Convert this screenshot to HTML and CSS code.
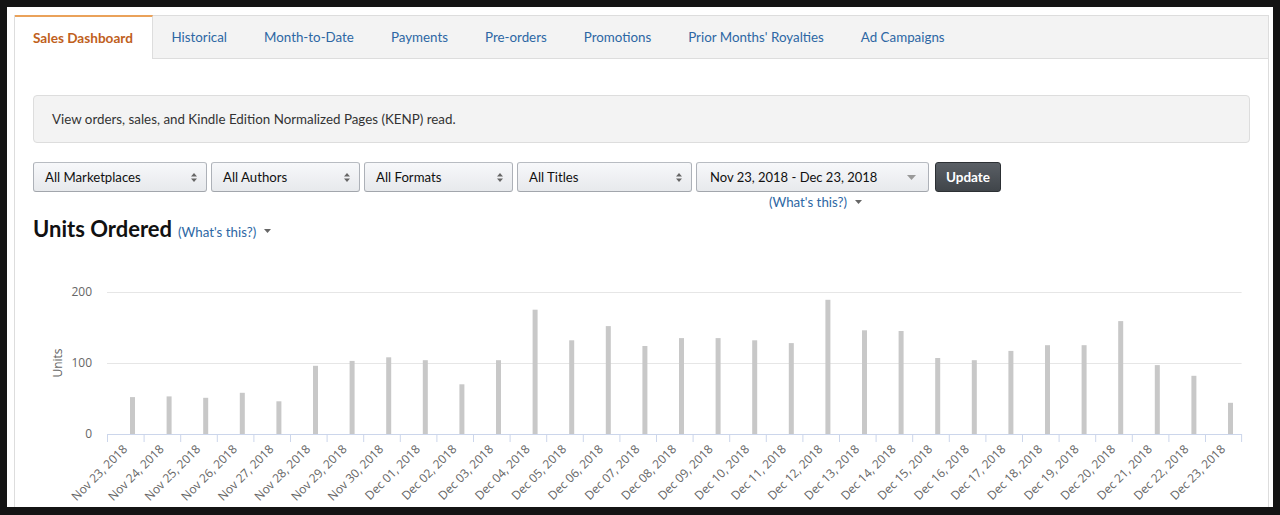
FILE: index.html
```html
<!DOCTYPE html>
<html>
<head>
<meta charset="utf-8">
<link rel="stylesheet" href="styles.css">
</head>
<body>
<div class="frame">
  <div class="panel">
    <nav class="tabs">
      <a class="tab active">Sales Dashboard</a>
      <a class="tab">Historical</a>
      <a class="tab">Month-to-Date</a>
      <a class="tab">Payments</a>
      <a class="tab">Pre-orders</a>
      <a class="tab">Promotions</a>
      <a class="tab">Prior Months' Royalties</a>
      <a class="tab">Ad Campaigns</a>
    </nav>
    <div class="content">
      <div class="info">View orders, sales, and Kindle Edition Normalized Pages (KENP) read.</div>
      <div class="filters">
        <div class="select w-market"><span>All Marketplaces</span><svg class="updown" width="6" height="9" viewBox="0 0 6 9"><path d="M0 3.5 L3 0 L6 3.5 Z M0 5.5 L3 9 L6 5.5 Z" fill="#666"/></svg></div>
        <div class="select w-author"><span>All Authors</span><svg class="updown" width="6" height="9" viewBox="0 0 6 9"><path d="M0 3.5 L3 0 L6 3.5 Z M0 5.5 L3 9 L6 5.5 Z" fill="#666"/></svg></div>
        <div class="select w-format"><span>All Formats</span><svg class="updown" width="6" height="9" viewBox="0 0 6 9"><path d="M0 3.5 L3 0 L6 3.5 Z M0 5.5 L3 9 L6 5.5 Z" fill="#666"/></svg></div>
        <div class="select w-title"><span>All Titles</span><svg class="updown" width="6" height="9" viewBox="0 0 6 9"><path d="M0 3.5 L3 0 L6 3.5 Z M0 5.5 L3 9 L6 5.5 Z" fill="#666"/></svg></div>
        <div class="datecol">
          <div class="select date"><span>Nov 23, 2018 - Dec 23, 2018</span><svg class="down" width="9" height="5" viewBox="0 0 9 5"><path d="M0 0 L9 0 L4.5 5 Z" fill="#999"/></svg></div>
          <div class="help center"><a class="link">(What's this?)</a><svg class="caret" width="7" height="4" viewBox="0 0 7 4"><path d="M0 0 L7 0 L3.5 4 Z" fill="#666"/></svg></div>
        </div>
        <button class="update">Update</button>
      </div>
      <div class="heading-row">
        <h2 class="heading">Units Ordered</h2>
        <a class="link">(What's this?)</a><svg class="caret" width="7" height="4" viewBox="0 0 7 4"><path d="M0 0 L7 0 L3.5 4 Z" fill="#666"/></svg>
      </div>
      <svg class="chart" width="1216" height="260" viewBox="0 0 1216 260">
        <g class="grid">
          <line x1="74" y1="42.5" x2="1208.6" y2="42.5"/>
          <line x1="74" y1="113.5" x2="1208.6" y2="113.5"/>
        </g>
        <g class="ylabels">
          <text x="59" y="46">200</text>
          <text x="59" y="117">100</text>
          <text x="59" y="188">0</text>
        </g>
        <text class="ytitle" transform="translate(29,113) rotate(-90)">Units</text>
        <g class="bars">
          <rect x="97" y="147.1" width="5" height="36.9"/>
          <rect x="133.6" y="146.4" width="5" height="37.6"/>
          <rect x="170.2" y="147.8" width="5" height="36.2"/>
          <rect x="206.8" y="142.8" width="5" height="41.2"/>
          <rect x="243.4" y="151.3" width="5" height="32.7"/>
          <rect x="280" y="115.8" width="5" height="68.2"/>
          <rect x="316.6" y="110.9" width="5" height="73.1"/>
          <rect x="353.2" y="107.3" width="5" height="76.7"/>
          <rect x="389.8" y="110.2" width="5" height="73.8"/>
          <rect x="426.4" y="134.3" width="5" height="49.7"/>
          <rect x="463" y="110.2" width="5" height="73.8"/>
          <rect x="499.6" y="59.7" width="5" height="124.3"/>
          <rect x="536.2" y="90.3" width="5" height="93.7"/>
          <rect x="572.8" y="76.1" width="5" height="107.9"/>
          <rect x="609.4" y="96" width="5" height="88"/>
          <rect x="646" y="88.1" width="5" height="95.9"/>
          <rect x="682.6" y="88.1" width="5" height="95.9"/>
          <rect x="719.2" y="90.3" width="5" height="93.7"/>
          <rect x="755.8" y="93.1" width="5" height="90.9"/>
          <rect x="792.4" y="49.8" width="5" height="134.2"/>
          <rect x="829" y="80.3" width="5" height="103.7"/>
          <rect x="865.6" y="81" width="5" height="103"/>
          <rect x="902.2" y="108" width="5" height="76"/>
          <rect x="938.8" y="110.2" width="5" height="73.8"/>
          <rect x="975.4" y="100.9" width="5" height="83.1"/>
          <rect x="1012" y="95.2" width="5" height="88.8"/>
          <rect x="1048.6" y="95.2" width="5" height="88.8"/>
          <rect x="1085.2" y="71.1" width="5" height="112.9"/>
          <rect x="1121.8" y="115.1" width="5" height="68.9"/>
          <rect x="1158.4" y="125.8" width="5" height="58.2"/>
          <rect x="1195" y="152.8" width="5" height="31.2"/>
        </g>
        <g class="axis">
          <line x1="74" y1="184.5" x2="1208.6" y2="184.5"/>
          <line x1="74.5" y1="184" x2="74.5" y2="192"/>
          <line x1="111.1" y1="184" x2="111.1" y2="192"/>
          <line x1="147.7" y1="184" x2="147.7" y2="192"/>
          <line x1="184.3" y1="184" x2="184.3" y2="192"/>
          <line x1="220.9" y1="184" x2="220.9" y2="192"/>
          <line x1="257.5" y1="184" x2="257.5" y2="192"/>
          <line x1="294.1" y1="184" x2="294.1" y2="192"/>
          <line x1="330.7" y1="184" x2="330.7" y2="192"/>
          <line x1="367.3" y1="184" x2="367.3" y2="192"/>
          <line x1="403.9" y1="184" x2="403.9" y2="192"/>
          <line x1="440.5" y1="184" x2="440.5" y2="192"/>
          <line x1="477.1" y1="184" x2="477.1" y2="192"/>
          <line x1="513.7" y1="184" x2="513.7" y2="192"/>
          <line x1="550.3" y1="184" x2="550.3" y2="192"/>
          <line x1="586.9" y1="184" x2="586.9" y2="192"/>
          <line x1="623.5" y1="184" x2="623.5" y2="192"/>
          <line x1="660.1" y1="184" x2="660.1" y2="192"/>
          <line x1="696.7" y1="184" x2="696.7" y2="192"/>
          <line x1="733.3" y1="184" x2="733.3" y2="192"/>
          <line x1="769.9" y1="184" x2="769.9" y2="192"/>
          <line x1="806.5" y1="184" x2="806.5" y2="192"/>
          <line x1="843.1" y1="184" x2="843.1" y2="192"/>
          <line x1="879.7" y1="184" x2="879.7" y2="192"/>
          <line x1="916.3" y1="184" x2="916.3" y2="192"/>
          <line x1="952.9" y1="184" x2="952.9" y2="192"/>
          <line x1="989.5" y1="184" x2="989.5" y2="192"/>
          <line x1="1026.1" y1="184" x2="1026.1" y2="192"/>
          <line x1="1062.7" y1="184" x2="1062.7" y2="192"/>
          <line x1="1099.3" y1="184" x2="1099.3" y2="192"/>
          <line x1="1135.9" y1="184" x2="1135.9" y2="192"/>
          <line x1="1172.5" y1="184" x2="1172.5" y2="192"/>
          <line x1="1208.6" y1="184" x2="1208.6" y2="192"/>
        </g>
        <g class="xlabels">
          <text transform="translate(95,200) rotate(-45)">Nov 23, 2018</text>
          <text transform="translate(131.6,200) rotate(-45)">Nov 24, 2018</text>
          <text transform="translate(168.2,200) rotate(-45)">Nov 25, 2018</text>
          <text transform="translate(204.8,200) rotate(-45)">Nov 26, 2018</text>
          <text transform="translate(241.4,200) rotate(-45)">Nov 27, 2018</text>
          <text transform="translate(278,200) rotate(-45)">Nov 28, 2018</text>
          <text transform="translate(314.6,200) rotate(-45)">Nov 29, 2018</text>
          <text transform="translate(351.2,200) rotate(-45)">Nov 30, 2018</text>
          <text transform="translate(387.8,200) rotate(-45)">Dec 01, 2018</text>
          <text transform="translate(424.4,200) rotate(-45)">Dec 02, 2018</text>
          <text transform="translate(461,200) rotate(-45)">Dec 03, 2018</text>
          <text transform="translate(497.6,200) rotate(-45)">Dec 04, 2018</text>
          <text transform="translate(534.2,200) rotate(-45)">Dec 05, 2018</text>
          <text transform="translate(570.8,200) rotate(-45)">Dec 06, 2018</text>
          <text transform="translate(607.4,200) rotate(-45)">Dec 07, 2018</text>
          <text transform="translate(644,200) rotate(-45)">Dec 08, 2018</text>
          <text transform="translate(680.6,200) rotate(-45)">Dec 09, 2018</text>
          <text transform="translate(717.2,200) rotate(-45)">Dec 10, 2018</text>
          <text transform="translate(753.8,200) rotate(-45)">Dec 11, 2018</text>
          <text transform="translate(790.4,200) rotate(-45)">Dec 12, 2018</text>
          <text transform="translate(827,200) rotate(-45)">Dec 13, 2018</text>
          <text transform="translate(863.6,200) rotate(-45)">Dec 14, 2018</text>
          <text transform="translate(900.2,200) rotate(-45)">Dec 15, 2018</text>
          <text transform="translate(936.8,200) rotate(-45)">Dec 16, 2018</text>
          <text transform="translate(973.4,200) rotate(-45)">Dec 17, 2018</text>
          <text transform="translate(1010,200) rotate(-45)">Dec 18, 2018</text>
          <text transform="translate(1046.6,200) rotate(-45)">Dec 19, 2018</text>
          <text transform="translate(1083.2,200) rotate(-45)">Dec 20, 2018</text>
          <text transform="translate(1119.8,200) rotate(-45)">Dec 21, 2018</text>
          <text transform="translate(1156.4,200) rotate(-45)">Dec 22, 2018</text>
          <text transform="translate(1193,200) rotate(-45)">Dec 23, 2018</text>
        </g>
      </svg>
    </div>
  </div>
</div>
</body>
</html>
```
FILE: styles.css
```css
* { box-sizing: border-box; }
html, body { margin: 0; padding: 0; }
body {
  background: #141414;
  font-family: "Lato", "Liberation Sans", sans-serif;
  font-size: 13.3px;
  color: #111;
}
.frame {
  margin: 7px 0 0 7px;
  width: 1266px;
  height: 500px;
  background: #fff;
  padding: 8px 4px 0 7px;
  overflow: hidden;
}
.panel {
  border-left: 1px solid #ddd;
  border-right: 1px solid #ddd;
  height: 100%;
}
.tabs {
  display: flex;
  height: 44px;
  background: #f3f3f3;
  border-top: 1px solid #ddd;
  border-bottom: 1px solid #ddd;
}
.tab {
  display: flex;
  align-items: center;
  padding: 0 18.5px;
  color: #2d67a4;
  font-size: 13.35px;
  white-space: nowrap;
}
.tab.active {
  background: #fff;
  color: #c0601c;
  font-weight: bold;
  margin-top: -1px;
  margin-bottom: -1px;
  border-top: 2px solid #eaa25a;
  border-right: 1px solid #ddd;
  padding: 0 19px 0 18px;
  font-size: 13.6px;
}
.content {
  padding: 0 18px;
}
.info {
  margin-top: 36px;
  background: #f3f3f3;
  border: 1px solid #ddd;
  border-radius: 4px;
  padding: 14px 18px;
  line-height: 18px;
  color: #333;
  font-size: 13.35px;
}
.filters {
  display: flex;
  align-items: flex-start;
  margin-top: 19px;
}
.select {
  display: flex;
  align-items: center;
  height: 30px;
  border: 1px solid #adb1b8;
  border-top-color: #b8bcc2;
  border-bottom-color: #a2a6ac;
  border-radius: 3px;
  background: linear-gradient(#f7f8fa, #e7e9ec);
  padding: 0 9px 0 11px;
  color: #111;
  white-space: nowrap;
  margin-right: 4px;
  font-size: 13.2px;
}
.select span { flex: 1; }
.w-market { width: 174px; }
.w-author { width: 149px; }
.w-format { width: 149px; }
.w-title { width: 175px; }
.datecol { display: flex; flex-direction: column; margin-right: 6px; }
.select.date { width: 233px; padding: 0 12px 0 13px; margin-right: 0; font-size: 13px; }
.help {
  display: flex;
  align-items: center;
  margin-top: 2px;
  line-height: 16px;
}
.help.center { justify-content: center; padding-left: 6px; }
.link { color: #2d67a4; font-size: 13.3px; }
.caret { margin-left: 8px; }
.update {
  height: 30px;
  width: 66px;
  border: 1px solid #2c3034;
  border-radius: 3px;
  background: linear-gradient(#5a5f65, #40454a);
  color: #fff;
  font-family: "Lato", "Liberation Sans", sans-serif;
  font-weight: bold;
  font-size: 13.5px;
  padding: 0;
}
.heading-row {
  display: flex;
  align-items: baseline;
  margin-top: 6px;
  height: 26px;
}
.heading {
  margin: 0 6px 0 0;
  font-size: 22px;
  font-weight: bold;
  line-height: 26px;
  color: #111;
}
.heading-row .caret { align-self: center; margin-top: 3px; }
.chart {
  display: block;
  margin-top: 8px;
  font-family: "Open Sans", "Liberation Sans", sans-serif;
}
.grid line { stroke: #e6e6e6; stroke-width: 1; }
.axis line { stroke: #ccd6eb; stroke-width: 1; }
.bars rect { fill: #c8c8c8; }
.ylabels text { font-size: 12px; fill: #666; text-anchor: end; }
.ytitle { font-size: 12px; fill: #666; text-anchor: middle; }
.xlabels text { font-size: 12px; fill: #666; text-anchor: end; }
```
